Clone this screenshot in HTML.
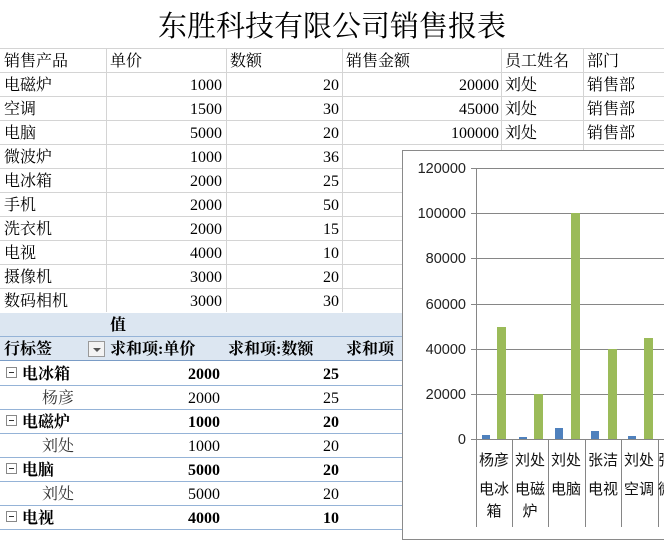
<!DOCTYPE html>
<html><head><meta charset="utf-8"><style>
*{margin:0;padding:0;box-sizing:border-box}
body{width:664px;height:531px;overflow:hidden;background:#fff;position:relative;font-family:"Liberation Serif","Noto Serif CJK SC",serif;font-size:16px;color:#000}
.a{position:absolute;white-space:nowrap;line-height:24px;padding-top:2px}
.r{text-align:right}
.h{position:absolute;height:1px;background:#d4d4d4}
.v{position:absolute;width:1px;background:#d4d4d4}
.ph{position:absolute;height:1px;background:#95b3d7}
.b{font-weight:bold}
.y{position:absolute;right:198px;font-family:"Liberation Sans",sans-serif;font-size:14.5px;color:#222;line-height:16px}
.gl{position:absolute;left:476px;width:188px;height:1px;background:#868686}
.cl{position:absolute;width:1px;background:#868686;top:439px;height:88px}
.cat{position:absolute;font-family:"Liberation Sans","Noto Sans CJK SC",sans-serif;font-size:15px;line-height:26px;text-align:center;width:36px;color:#111}
</style></head><body>
<div class="a" style="left:0;top:7px;width:664px;text-align:center;font-size:29px;line-height:36px">东胜科技有限公司销售报表</div>
<div class="h" style="left:0;top:48px;width:664px"></div>
<div class="h" style="left:0;top:72px;width:664px"></div>
<div class="h" style="left:0;top:96px;width:664px"></div>
<div class="h" style="left:0;top:120px;width:664px"></div>
<div class="h" style="left:0;top:144px;width:664px"></div>
<div class="h" style="left:0;top:168px;width:403px"></div>
<div class="h" style="left:0;top:192px;width:403px"></div>
<div class="h" style="left:0;top:216px;width:403px"></div>
<div class="h" style="left:0;top:240px;width:403px"></div>
<div class="h" style="left:0;top:264px;width:403px"></div>
<div class="h" style="left:0;top:288px;width:403px"></div>
<div class="v" style="left:106px;top:48px;height:264px"></div>
<div class="v" style="left:226px;top:48px;height:264px"></div>
<div class="v" style="left:342px;top:48px;height:264px"></div>
<div class="v" style="left:501px;top:48px;height:102px"></div>
<div class="v" style="left:583px;top:48px;height:102px"></div>

<div class="a" style="left:4px;top:48px">销售产品</div><div class="a" style="left:110px;top:48px">单价</div><div class="a" style="left:230px;top:48px">数额</div><div class="a" style="left:346px;top:48px">销售金额</div><div class="a" style="left:505px;top:48px">员工姓名</div><div class="a" style="left:587px;top:48px">部门</div>

<div class="a" style="left:4px;top:72px">电磁炉</div><div class="a r" style="left:106px;width:116px;top:72px">1000</div><div class="a r" style="left:226px;width:113px;top:72px">20</div><div class="a r" style="left:342px;width:157px;top:72px">20000</div><div class="a" style="left:505px;top:72px">刘处</div><div class="a" style="left:587px;top:72px">销售部</div>
<div class="a" style="left:4px;top:96px">空调</div><div class="a r" style="left:106px;width:116px;top:96px">1500</div><div class="a r" style="left:226px;width:113px;top:96px">30</div><div class="a r" style="left:342px;width:157px;top:96px">45000</div><div class="a" style="left:505px;top:96px">刘处</div><div class="a" style="left:587px;top:96px">销售部</div>
<div class="a" style="left:4px;top:120px">电脑</div><div class="a r" style="left:106px;width:116px;top:120px">5000</div><div class="a r" style="left:226px;width:113px;top:120px">20</div><div class="a r" style="left:342px;width:157px;top:120px">100000</div><div class="a" style="left:505px;top:120px">刘处</div><div class="a" style="left:587px;top:120px">销售部</div>
<div class="a" style="left:4px;top:144px">微波炉</div><div class="a r" style="left:106px;width:116px;top:144px">1000</div><div class="a r" style="left:226px;width:113px;top:144px">36</div>
<div class="a" style="left:4px;top:168px">电冰箱</div><div class="a r" style="left:106px;width:116px;top:168px">2000</div><div class="a r" style="left:226px;width:113px;top:168px">25</div>
<div class="a" style="left:4px;top:192px">手机</div><div class="a r" style="left:106px;width:116px;top:192px">2000</div><div class="a r" style="left:226px;width:113px;top:192px">50</div>
<div class="a" style="left:4px;top:216px">洗衣机</div><div class="a r" style="left:106px;width:116px;top:216px">2000</div><div class="a r" style="left:226px;width:113px;top:216px">15</div>
<div class="a" style="left:4px;top:240px">电视</div><div class="a r" style="left:106px;width:116px;top:240px">4000</div><div class="a r" style="left:226px;width:113px;top:240px">10</div>
<div class="a" style="left:4px;top:264px">摄像机</div><div class="a r" style="left:106px;width:116px;top:264px">3000</div><div class="a r" style="left:226px;width:113px;top:264px">20</div>
<div class="a" style="left:4px;top:288px">数码相机</div><div class="a r" style="left:106px;width:116px;top:288px">3000</div><div class="a r" style="left:226px;width:113px;top:288px">30</div>

<!-- pivot -->
<div style="position:absolute;left:0;top:313px;width:403px;height:47px;background:#dce6f1"></div>
<div class="ph" style="left:0;top:336px;width:403px"></div>
<div class="ph" style="left:0;top:360px;width:403px;background:#7a9cc6"></div>
<div class="a b" style="left:110px;top:312px">值</div>
<div class="a b" style="left:4px;top:336px">行标签</div>
<div style="position:absolute;left:88px;top:341px;width:17px;height:16px;border:1px solid #999;background:#f3f3f3"><div style="position:absolute;left:4px;top:6px;border-left:4px solid transparent;border-right:4px solid transparent;border-top:4px solid #555"></div></div>
<div class="a b" style="left:110px;top:336px">求和项:单价</div><div class="a b" style="left:228px;top:336px">求和项:数额</div><div class="a b" style="left:346px;top:336px">求和项</div>
<div class="ph" style="left:0;top:385px;width:403px"></div>
<div class="ph" style="left:0;top:409px;width:403px"></div>
<div class="ph" style="left:0;top:433px;width:403px"></div>
<div class="ph" style="left:0;top:457px;width:403px"></div>
<div class="ph" style="left:0;top:481px;width:403px"></div>
<div class="ph" style="left:0;top:505px;width:403px"></div>
<div class="ph" style="left:0;top:529px;width:403px"></div>

<div style="position:absolute;left:6px;top:367px;width:11px;height:11px;border:1px solid #888"><div style="position:absolute;left:2px;top:4px;width:5px;height:1px;background:#333"></div></div>
<div class="a b" style="left:22px;top:361px">电冰箱</div><div class="a r b" style="left:110px;width:110px;top:361px">2000</div><div class="a r b" style="left:226px;width:113px;top:361px">25</div>
<div class="a" style="left:42px;top:385px;color:#333">杨彦</div><div class="a r" style="left:110px;width:110px;top:385px">2000</div><div class="a r" style="left:226px;width:113px;top:385px">25</div>
<div style="position:absolute;left:6px;top:415px;width:11px;height:11px;border:1px solid #888"><div style="position:absolute;left:2px;top:4px;width:5px;height:1px;background:#333"></div></div>
<div class="a b" style="left:22px;top:409px">电磁炉</div><div class="a r b" style="left:110px;width:110px;top:409px">1000</div><div class="a r b" style="left:226px;width:113px;top:409px">20</div>
<div class="a" style="left:42px;top:433px;color:#333">刘处</div><div class="a r" style="left:110px;width:110px;top:433px">1000</div><div class="a r" style="left:226px;width:113px;top:433px">20</div>
<div style="position:absolute;left:6px;top:463px;width:11px;height:11px;border:1px solid #888"><div style="position:absolute;left:2px;top:4px;width:5px;height:1px;background:#333"></div></div>
<div class="a b" style="left:22px;top:457px">电脑</div><div class="a r b" style="left:110px;width:110px;top:457px">5000</div><div class="a r b" style="left:226px;width:113px;top:457px">20</div>
<div class="a" style="left:42px;top:481px;color:#333">刘处</div><div class="a r" style="left:110px;width:110px;top:481px">5000</div><div class="a r" style="left:226px;width:113px;top:481px">20</div>
<div style="position:absolute;left:6px;top:511px;width:11px;height:11px;border:1px solid #888"><div style="position:absolute;left:2px;top:4px;width:5px;height:1px;background:#333"></div></div>
<div class="a b" style="left:22px;top:505px">电视</div><div class="a r b" style="left:110px;width:110px;top:505px">4000</div><div class="a r b" style="left:226px;width:113px;top:505px">10</div>

<!-- chart -->
<div style="position:absolute;left:402px;top:150px;width:270px;height:390px;background:#fff;border:1px solid #8a8a8a"></div>
<div class="gl" style="top:168px;left:471px;width:193px"></div>
<div class="gl" style="top:213px;left:471px;width:193px"></div>
<div class="gl" style="top:258px;left:471px;width:193px"></div>
<div class="gl" style="top:304px;left:471px;width:193px"></div>
<div class="gl" style="top:349px;left:471px;width:193px"></div>
<div class="gl" style="top:394px;left:471px;width:193px"></div>
<div class="gl" style="top:439px;left:471px;width:193px"></div>
<div style="position:absolute;left:476px;top:168px;width:1px;height:272px;background:#868686"></div>
<div class="y" style="top:161px">120000</div>
<div class="y" style="top:206px">100000</div>
<div class="y" style="top:251px">80000</div>
<div class="y" style="top:297px">60000</div>
<div class="y" style="top:342px">40000</div>
<div class="y" style="top:387px">20000</div>
<div class="y" style="top:432px">0</div>
<!-- bars -->
<div style="position:absolute;left:482px;top:435px;width:8px;height:4px;background:#4f81bd"></div>
<div style="position:absolute;left:497px;top:327px;width:9px;height:112px;background:#9bbb59"></div>
<div style="position:absolute;left:519px;top:437px;width:8px;height:2px;background:#4f81bd"></div>
<div style="position:absolute;left:534px;top:394px;width:9px;height:45px;background:#9bbb59"></div>
<div style="position:absolute;left:555px;top:428px;width:8px;height:11px;background:#4f81bd"></div>
<div style="position:absolute;left:571px;top:213px;width:9px;height:226px;background:#9bbb59"></div>
<div style="position:absolute;left:591px;top:431px;width:8px;height:8px;background:#4f81bd"></div>
<div style="position:absolute;left:608px;top:349px;width:9px;height:90px;background:#9bbb59"></div>
<div style="position:absolute;left:628px;top:436px;width:8px;height:3px;background:#4f81bd"></div>
<div style="position:absolute;left:644px;top:338px;width:9px;height:101px;background:#9bbb59"></div>
<div class="cl" style="left:476px"></div>
<div class="cl" style="left:512px"></div>
<div class="cl" style="left:548px"></div>
<div class="cl" style="left:585px"></div>
<div class="cl" style="left:621px"></div>
<div class="cl" style="left:658px"></div>
<div class="cat" style="left:476px;top:448px">杨彦</div>
<div class="cat" style="left:512px;top:448px">刘处</div>
<div class="cat" style="left:548px;top:448px">刘处</div>
<div class="cat" style="left:585px;top:448px">张洁</div>
<div class="cat" style="left:621px;top:448px">刘处</div>
<div class="cat" style="left:658px;top:448px;text-align:left">张</div>
<div class="cat" style="left:476px;top:479px;line-height:22px">电冰<br>箱</div>
<div class="cat" style="left:512px;top:479px;line-height:22px">电磁<br>炉</div>
<div class="cat" style="left:548px;top:479px;line-height:22px">电脑</div>
<div class="cat" style="left:585px;top:479px;line-height:22px">电视</div>
<div class="cat" style="left:621px;top:479px;line-height:22px">空调</div>
<div class="cat" style="left:658px;top:479px;line-height:22px;text-align:left">微</div>
</body></html>
